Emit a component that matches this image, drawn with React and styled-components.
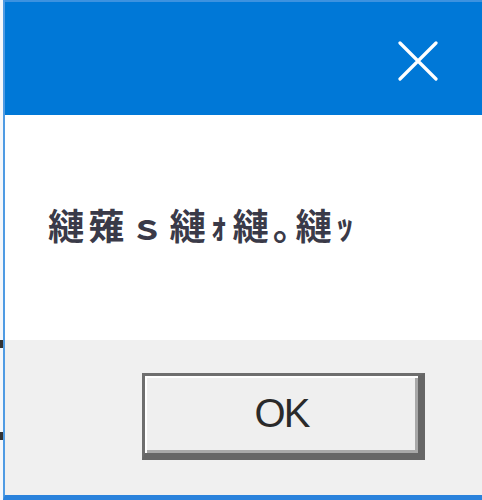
import React from 'react';
import styled, { createGlobalStyle } from 'styled-components';

const Global = createGlobalStyle`
  html, body {
    margin: 0;
    padding: 0;
    background: #ffffff;
  }
`;

function CloseIcon() {
  return (
    <svg width="40" height="40" viewBox="0 0 40 40">
      <path d="M2 2 L38 38 M38 2 L2 38" stroke="#ffffff" strokeWidth="3.2" strokeLinecap="round" />
    </svg>
  );
}

export default function App() {
  return (
    <Screen>
      <Global />
      <Outside>
        <Mark top={340} />
        <Mark top={432} />
      </Outside>
      <Window>
        <TitleBar>
          <CloseButton>
            <CloseIcon />
          </CloseButton>
        </TitleBar>
        <Body>
          <Message>縺薙ｓ縺ｫ縺｡縺ｯ</Message>
        </Body>
        <Footer>
          <OkButton>OK</OkButton>
        </Footer>
      </Window>
    </Screen>
  );
}

const Screen = styled.div`
  display: flex;
  width: 482px;
  height: 500px;
  overflow: hidden;
`;

const Outside = styled.div`
  position: relative;
  width: 3px;
  flex: none;
  background: #f4f7fb;
`;

const Mark = styled.div`
  position: absolute;
  left: 0;
  top: ${(p) => p.top}px;
  width: 3px;
  height: 8px;
  background: #333;
`;

const Window = styled.div`
  flex: 1;
  display: flex;
  flex-direction: column;
  border-left: 2px solid #4f9be3;
  border-bottom: 5px solid #2a82dc;
`;

const TitleBar = styled.div`
  height: 113px;
  flex: none;
  display: flex;
  justify-content: flex-end;
  align-items: center;
  background: #0078d7;
  border-top: 2px solid #3c92e0;
`;

const CloseButton = styled.div`
  width: 40px;
  height: 40px;
  margin-right: 44px;
  margin-top: 4px;
  display: flex;
`;

const Body = styled.div`
  height: 225px;
  flex: none;
  display: flex;
  align-items: center;
  background: #ffffff;
  padding-left: 43px;
  box-sizing: border-box;
`;

const Message = styled.div`
  font-family: "Noto Sans CJK JP", sans-serif;
  font-size: 36px;
  font-weight: 700;
  color: #3a3a48;
  margin-top: -8px;
  letter-spacing: 4.5px;
`;

const Footer = styled.div`
  flex: 1;
  background: #f0f0f0;
  padding-top: 33px;
  padding-left: 137px;
  box-sizing: border-box;
`;

const OkButton = styled.div`
  width: 283px;
  height: 87px;
  box-sizing: border-box;
  display: flex;
  align-items: center;
  justify-content: center;
  background: #efefef;
  border-top: 3px solid #6e6e6e;
  border-left: 3px solid #6e6e6e;
  border-right: 7px solid #666666;
  border-bottom: 7px solid #666666;
  box-shadow: inset 2px 2px 0 #ffffff, inset -3px -3px 0 #a8a8a8;
  font-family: "Liberation Sans", Arial, sans-serif;
  font-size: 40px;
  letter-spacing: -2px;
  color: #2a2a2a;
  padding-bottom: 2px;
`;
